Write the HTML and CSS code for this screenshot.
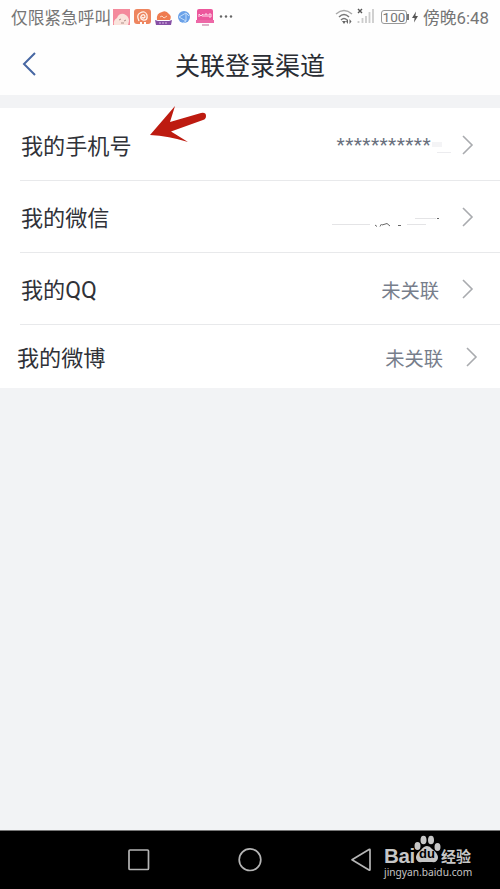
FILE: index.html
```html
<!DOCTYPE html>
<html lang="zh-CN">
<head>
<meta charset="utf-8">
<title>关联登录渠道</title>
<link rel="stylesheet" href="styles.css">
</head>
<body>
<div class="status">
  <span class="carrier">仅限紧急呼叫</span>
  <svg class="apps" width="122" height="20" viewBox="0 0 122 20">
    <rect x="1" y="1" width="17" height="16" fill="#f48a9c"/>
    <path d="M2 17Q1 12 5 10Q7 5 12 6Q17 8 17 13L16 17Z" fill="#fae3dc"/>
    <path d="M7 12l2-1M12 13l2-1M9 15h3" stroke="#ad8e87" fill="none"/>
    <rect x="22" y="1" width="17" height="15" rx="3" fill="#ee855f"/>
    <path d="M27 13Q24 7 28 5Q33 2 35 7Q36 13 31 12Q27 10 30 7Q33 6 33 9Q31 11 30 9" stroke="#fff3eb" stroke-width="1.3" fill="none"/>
    <path d="M28 15h2M32 15h2" stroke="#fff" stroke-width="2"/>
    <path d="M45 12Q44 5 50 4Q54 2 57 6Q60 8 58 12Z" fill="#ef7c50"/>
    <path d="M48 9L50 8L52 10L55 8" stroke="#fbd5be" fill="none"/>
    <path d="M43 12L46 13H57L60 12L59 17H44Z" fill="#864fa5"/>
    <path d="M47 15h9" stroke="#d9b8e4" stroke-dasharray="2 1"/>
    <circle cx="72" cy="9" r="6" fill="#6aa1e8"/>
    <path d="M67 9L74 5V13ZM74 5L77 8M74 13L71 15" stroke="#c2dcfa" fill="none"/>
    <rect x="85" y="1" width="16" height="13" rx="2" fill="#ec579c"/>
    <path d="M84 12h18v3H84z" fill="#ed68a7"/>
    <path d="M87 9V6l2 2l2-2v3M93 9V6h2v3M97 6h2v3h-2z" stroke="#ffdceb" fill="none"/>
    <path d="M90 17h7" stroke="#deb2c9" stroke-width="2"/>
    <g fill="#666"><circle cx="109" cy="8.500" r="1.200"/><circle cx="114" cy="8.500" r="1.200"/><circle cx="119" cy="8.500" r="1.200"/></g>
  </svg>
  <svg class="signals" width="42" height="20" viewBox="0 0 42 20">
    <g fill="none" stroke="#777" stroke-width="1.5"><path d="M1 6Q9-1 17 6" stroke="#aaa"/><path d="M4 9Q9 4 14 9"/><path d="M6 12Q9 9 12 12"/></g>
    <path d="M7 13h4l-2 3zM13 11l-2 2.500l2 2.500zM14.500 11l2 2.500l-2 2.500z" fill="#666"/>
    <path d="M23 1l4 4M27 1l-4 4" stroke="#555" stroke-width="1.4"/>
    <path d="M23.500 13v2M27.500 10v5M31 8v7M34.500 4v11M38 1v14" stroke="#ccc" stroke-width="1.8"/>
  </svg>
  <span class="battery">100</span>
  <svg class="charge" width="12" height="16" viewBox="0 0 12 16"><path d="M1 5v6" stroke="#777" stroke-width="2"/><path d="M9 2.500L5 9H7.600L7 13.500L11 7H8.400Z" fill="#555"/></svg>
  <span class="clock">傍晚6:48</span>
</div>
<header class="header">
  <svg class="back" width="14" height="24" viewBox="0 0 14 24"><path d="M13 1L2 12L13 23" fill="none" stroke="#4767a3" stroke-width="2"/></svg>
  <h1 class="title">关联登录渠道</h1>
</header>
<main class="list">
  <div class="row">
    <span class="label">我的手机号</span>
    <svg class="arrow" viewBox="0 0 60 40"><path d="M2 30L27 1L22 17L53 8Q58 7 58 11Q58 14 55 15L23 26.500L40 37Q21 31 2 30Z" fill="#bd1b10"/></svg>
    <span class="value masked">***********</span>
    <svg class="smudge" viewBox="0 0 24 20"><path d="M1 8h10v5H1z" fill="#f4f4f6"/><path d="M6 18.500h14" stroke="#ececef"/></svg>
    <svg class="chevron" viewBox="0 0 12 20"><path d="M1 1L10 10L1 19"/></svg>
  </div>
  <div class="row">
    <span class="label">我的微信</span>
    <svg class="redacted" viewBox="0 0 110 20"><path d="M0 15.500H38M75 15.500H94M83 9.500H104" stroke="#e4e4e6"/><path d="M43 16l2 1.500M48 17.500l1.500-2.500M50 16l5-1.500l3 2.500M66 16.500h3M105 9.500h2" stroke="#666" fill="none"/></svg>
    <svg class="chevron" viewBox="0 0 12 20"><path d="M1 1L10 10L1 19"/></svg>
  </div>
  <div class="row">
    <span class="label">我的<span class="latin">QQ</span></span>
    <span class="value">未关联</span>
    <svg class="chevron" viewBox="0 0 12 20"><path d="M1 1L10 10L1 19"/></svg>
  </div>
  <div class="row last">
    <span class="label">我的微博</span>
    <span class="value">未关联</span>
    <svg class="chevron" viewBox="0 0 12 20"><path d="M1 1L10 10L1 19"/></svg>
  </div>
</main>
<nav class="navbar">
  <svg class="keys" width="372" height="58" viewBox="0 0 372 58">
    <g fill="none" stroke="#b5b5b5" stroke-width="1.7"><rect x="129" y="19" width="19.500" height="19.500" rx="1"/><circle cx="250" cy="28.700" r="10.800"/><path d="M352 28.700L369 18.500Q370 18 370 19V38.500Q370 39.500 369 39Z" stroke-linejoin="round"/></g>
  </svg>
  <div class="watermark">
    <div class="brand">
      <span class="bai">Bai</span>
      <span class="paw">
        <svg width="27" height="28" viewBox="0 0 27 28"><g fill="#c6c6c6"><ellipse cx="3.500" cy="11" rx="3" ry="4"/><ellipse cx="9.500" cy="5" rx="3" ry="4.300"/><ellipse cx="17" cy="5" rx="3" ry="4.300"/><ellipse cx="23.500" cy="12" rx="3" ry="4"/><path d="M13 11Q16 11 18 14Q24 18 24 23Q23 28 18 27H8Q3 28 2 23Q2 18 7 15Q10 11 13 11Z"/></g></svg>
        <span class="du">du</span>
      </span>
      <span class="exp">经验</span>
    </div>
    <div class="url">jingyan.baidu.com</div>
  </div>
</nav>
</body>
</html>
```

FILE: styles.css
```css
* { box-sizing: border-box; }
body {
  margin: 0;
  height: 889px;
  display: flex;
  flex-direction: column;
  background: #f2f3f5;
  font-family: Roboto, "Noto Sans CJK SC", sans-serif;
  overflow: hidden;
}
svg { display: block; flex: none; }
span { white-space: nowrap; }
.status {
  height: 34px;
  flex: none;
  display: flex;
  align-items: center;
  padding: 0 11px;
  background: #fefefe;
  color: #757575;
  font-size: 16.7px;
  line-height: 34px;
}
.carrier { width: 101px; padding-top: 3px; }
.apps { margin-top: 1px; }
.signals { margin-left: 101px; margin-top: 2px; }
.battery {
  width: 26px;
  height: 14px;
  margin-left: 4px;
  border: 1px solid #999;
  border-radius: 3px;
  font-size: 13.5px;
  line-height: 13px;
  text-align: center;
}
.clock { margin-left: 4px; padding-top: 1px; font-size: 16.8px; }
.header {
  height: 61px;
  flex: none;
  display: flex;
  align-items: center;
  padding-left: 22px;
  background: #fefefe;
}
.back { margin-top: -1px; }
.title {
  margin: 5px 0 0 139px;
  color: #292c33;
  font-size: 25px;
  font-weight: 400;
  line-height: 56px;
}
.list { margin-top: 13px; background: #fff; }
.row {
  height: 72px;
  display: flex;
  align-items: center;
  padding: 0 26px 0 21px;
}
.row + .row { background: linear-gradient(#e8e9eb, #e8e9eb) 20px 0 / 480px 1px no-repeat; }
.label { padding-top: 5px; color: #303238; font-size: 22.1px; line-height: 67px; }
.latin { font-size: 23px; }
.value { margin-left: auto; padding-top: 7px; color: #777e8b; font-size: 19.3px; line-height: 65px; }
.chevron {
  width: 12px;
  height: 20px;
  margin: 1px 0 0 23px;
  fill: none;
  stroke: #a9abaf;
  stroke-width: 1.6;
}
.arrow { width: 60px; height: 40px; margin: -38px 0 0 17px; }
.masked { padding-top: 1px; color: #69707d; font-size: 19px; letter-spacing: .4px; }
.smudge { width: 24px; height: 20px; }
.smudge + .chevron { margin-left: 7px; }
.redacted { width: 110px; height: 20px; margin: 5px 0 0 auto; }
.redacted + .chevron { margin-left: 20px; }
.last { height: 64px; padding: 0 22px 0 17px; }
.last .label, .last .value { line-height: 57px; }
.navbar {
  height: 59px;
  flex: none;
  display: flex;
  margin-top: auto;
  border-top: 1px solid #777;
  background: #000;
}
.watermark { width: 100px; margin-left: 12px; padding-top: 4px; color: #c6c6c6; }
.brand { height: 30px; display: flex; }
.bai { width: 30px; padding-top: 12px; font: bold 20.5px/18px "Liberation Sans", sans-serif; letter-spacing: -.3px; }
.paw { position: relative; width: 27px; }
.du {
  position: absolute;
  left: 5px;
  top: 12px;
  color: #000;
  font: bold 13px/14px "Liberation Sans", sans-serif;
}
.exp { padding-top: 12px; font: bold 15px/17px "Noto Sans CJK SC", sans-serif; }
.url { font: 10.2px/15px "Noto Sans", sans-serif; }
```
